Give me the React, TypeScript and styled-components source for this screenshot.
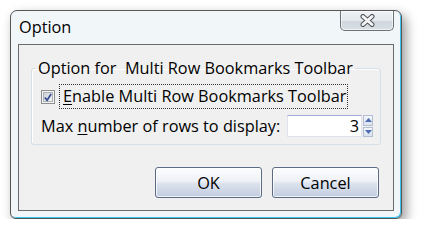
import React from 'react';
import styled, { createGlobalStyle } from 'styled-components';

const GlobalStyle = createGlobalStyle`
  html, body {
    margin: 0;
    padding: 0;
    background: #fff;
  }
  body {
    font-family: "Open Sans", "Noto Sans", sans-serif;
    font-size: 16.3px;
    color: #000;
  }
`;

const Page = styled.div`
  padding: 10px 0 0 10px;
`;

const Window = styled.div`
  width: 392px;
  height: 209px;
  box-sizing: border-box;
  border: 1px solid #565656;
  border-radius: 7px 7px 6px 6px;
  background: #f1f6f9;
  display: flex;
  flex-direction: column;
  box-shadow: inset -1px -1px 0 #3cc4f0, 4px 5px 12px rgba(0, 0, 0, 0.4);
`;

const TitleBar = styled.div`
  height: 33px;
  display: flex;
  align-items: flex-start;
  justify-content: space-between;
`;

const Title = styled.div`
  padding: 6px 0 0 8px;
  line-height: 20px;
`;

const CloseButton = styled.div`
  width: 54px;
  height: 20px;
  margin-right: 7px;
  box-sizing: border-box;
  border: 1px solid #6d7276;
  border-top: none;
  border-radius: 0 0 5px 5px;
  background: linear-gradient(180deg, #eef2f5 0%, #e2e8ec 50%, #cfd6dc 52%, #d9e0e5 100%);
  box-shadow: inset 0 0 0 1px rgba(255, 255, 255, 0.6);
  display: flex;
  align-items: center;
  justify-content: center;
`;

const Client = styled.div`
  flex: 1;
  margin: 0 7px 7px;
  border: 1px solid #6b6b6b;
  background: #f0f0f0;
  padding: 13px 12px 12px;
  display: flex;
  flex-direction: column;
`;

const GroupBox = styled.fieldset`
  margin: 0;
  padding: 6px 0 7px 4px;
  border: 1px solid #d5dfe5;
  border-radius: 3px;
  box-shadow: inset 1px 1px 0 #fff;
`;

const Legend = styled.legend`
  padding: 0 2px;
  line-height: 20px;
`;

const Rows = styled.div`
  padding-left: 5px;
  display: flex;
  flex-direction: column;
  gap: 6px;
`;

const CheckRow = styled.div`
  display: flex;
  align-items: center;
  gap: 4px;
  height: 25px;
`;

const CheckBox = styled.div`
  width: 14px;
  height: 14px;
  box-sizing: border-box;
  border: 1px solid #8e8f8f;
  background: #f4f4f4;
  padding: 1px;
  margin-top: 1px;
`;

const CheckInner = styled.div`
  width: 100%;
  height: 100%;
  box-sizing: border-box;
  border: 1px solid #adb2b5;
  background: linear-gradient(135deg, #cbcfd5 0%, #f6f6f6 100%);
  display: flex;
  align-items: center;
  justify-content: center;
`;

const FocusLabel = styled.span`
  border: 1px dotted #333;
  padding: 1px 1px 1px 3px;
  line-height: 21px;
`;

const Key = styled.span`
  text-decoration: underline;
  text-underline-offset: 2px;
`;

const SpinRow = styled.div`
  display: flex;
  align-items: center;
  height: 22px;
`;

const SpinBox = styled.div`
  margin-left: auto;
  margin-right: 7px;
  display: flex;
  height: 22px;
`;

const NumberField = styled.div`
  width: 75px;
  box-sizing: border-box;
  border: 1px solid #dfe3f0;
  border-top-color: #a3aad6;
  background: #fff;
  text-align: right;
  padding-right: 2px;
  line-height: 20px;
`;

const Spinner = styled.div`
  width: 10px;
  margin-left: 1px;
  display: flex;
  flex-direction: column;
  gap: 1px;
`;

const SpinHalf = styled.div`
  flex: 1;
  box-sizing: border-box;
  border: 1px solid #b4bfd4;
  background: linear-gradient(180deg, #f4f6fa, #dbe2ee);
  display: flex;
  align-items: center;
  justify-content: center;
`;

const Buttons = styled.div`
  margin-top: auto;
  display: flex;
  justify-content: flex-end;
  gap: 10px;
  padding-right: 2px;
`;

const Button = styled.div`
  width: 107px;
  height: 31px;
  box-sizing: border-box;
  border: 1px solid #5c6a84;
  border-radius: 3px;
  background: linear-gradient(180deg, #fcfdfe 0%, #eef1f6 45%, #dbe2ed 55%, #c3cde0 100%);
  box-shadow: inset 0 0 0 1px rgba(255, 255, 255, 0.75);
  display: flex;
  align-items: center;
  justify-content: center;
  line-height: 20px;
`;

const Arrow = ({ up }: { up?: boolean }) => (
  <svg width="7" height="4" viewBox="0 0 7 4">
    <path d={up ? 'M0 4 L3.5 0 L7 4 Z' : 'M0 0 L3.5 4 L7 0 Z'} fill="#4c6cb3" />
  </svg>
);

const App = () => {
  return (
    <>
      <GlobalStyle />
      <Page>
        <Window>
          <TitleBar>
            <Title>Option</Title>
            <CloseButton>
              <svg width="15" height="13" viewBox="0 0 15 13">
                <g strokeLinecap="round">
                  <path d="M3 2.5 L12 10.5 M12 2.5 L3 10.5" stroke="#4f5357" strokeWidth="5" />
                  <path d="M3 2.5 L12 10.5 M12 2.5 L3 10.5" stroke="#f4f6f8" strokeWidth="3" />
                </g>
              </svg>
            </CloseButton>
          </TitleBar>
          <Client>
            <GroupBox>
              <Legend>Option for&nbsp; Multi Row Bookmarks Toolbar</Legend>
              <Rows>
                <CheckRow>
                  <CheckBox>
                    <CheckInner>
                      <svg width="9" height="9" viewBox="0 0 9 9">
                        <path d="M1 4.5 L3.5 7.5 L8 0.5" stroke="#3a4f93" strokeWidth="2" fill="none" />
                      </svg>
                    </CheckInner>
                  </CheckBox>
                  <FocusLabel>
                    <Key>E</Key>nable Multi Row Bookmarks Toolbar
                  </FocusLabel>
                </CheckRow>
                <SpinRow>
                  <span>
                    Max <Key>n</Key>umber of rows to display:
                  </span>
                  <SpinBox>
                    <NumberField>3</NumberField>
                    <Spinner>
                      <SpinHalf>
                        <Arrow up />
                      </SpinHalf>
                      <SpinHalf>
                        <Arrow />
                      </SpinHalf>
                    </Spinner>
                  </SpinBox>
                </SpinRow>
              </Rows>
            </GroupBox>
            <Buttons>
              <Button>OK</Button>
              <Button>Cancel</Button>
            </Buttons>
          </Client>
        </Window>
      </Page>
    </>
  );
};

export default App;
